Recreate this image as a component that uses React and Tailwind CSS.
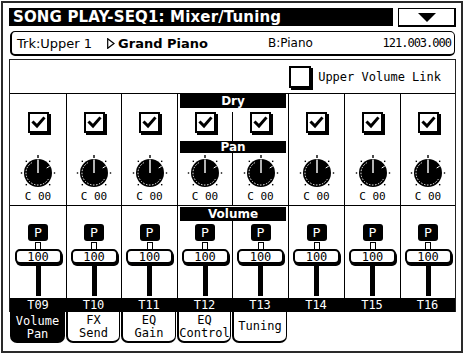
import React from 'react';

const MONO = "font-['DejaVu_Sans_Mono',monospace]";
const SANS = "font-['DejaVu_Sans',sans-serif]";

function Knob() {
  const angles = [-135, -90, -45, 45, 90, 135];
  const dots = angles.map((a) => {
    const rad = ((a - 90) * Math.PI) / 180;
    return [18 + 16.5 * Math.cos(rad), 18 + 16.5 * Math.sin(rad)];
  });
  return (
    <svg width="36" height="36" viewBox="0 0 36 36">
      {dots.map(([x, y], i) => (
        <rect key={i} x={x - 0.7} y={y - 0.7} width="1.4" height="1.4" fill="#000" />
      ))}
      <rect x="17.3" y="0" width="1.4" height="3" fill="#000" />
      <circle cx="18" cy="18" r="14" fill="#000" />
      <path d="M28.39 24 A12 12 0 1 1 12 7.61" fill="none" stroke="#fff" strokeWidth="1" strokeDasharray="1.5 1.5" />
      <line x1="26.7" y1="13" x2="29.7" y2="11.2" stroke="#fff" strokeWidth="1" />
      <line x1="18" y1="18" x2="18" y2="4.5" stroke="#fff" strokeWidth="1.4" />
    </svg>
  );
}

function CheckBox() {
  return (
    <div className="w-[21px] h-[21px] border-2 border-black bg-white shadow-[2px_2px_0_#000]">
      <svg width="17" height="17" viewBox="0 0 17 17">
        <path d="M3.5 8.5 L7 12 L13.5 4.5" fill="none" stroke="#000" strokeWidth="3" strokeLinecap="square" />
      </svg>
    </div>
  );
}

function KnobCell() {
  return (
    <div className="flex flex-col items-center pt-[2px]">
      <Knob />
      <div className={`${MONO} text-[11px] leading-[12px] text-black whitespace-pre`}>C 00</div>
    </div>
  );
}

function Fader() {
  return (
    <div className="h-full flex flex-col items-center pt-[3px] pb-[2px]">
      <div className={`${SANS} w-[20px] h-[17px] bg-black rounded-[3px] text-white text-[13px] leading-none flex items-center justify-center`}>
        P
      </div>
      <div className="w-[6px] h-[8px] mt-[1px] border border-black bg-white" />
      <div className={`${MONO} w-[47px] h-[15px] -mt-[1px] border-2 border-black rounded-[5px] bg-white shadow-[1px_2px_0_#000] flex items-center justify-center text-[12px] leading-none text-black`}>
        100
      </div>
      <div className="w-[5px] flex-1 bg-black mt-[1px]" />
    </div>
  );
}

function Bar({ children }) {
  return (
    <div className={`${SANS} h-full bg-black text-white font-bold text-[12px] leading-none flex items-center justify-center`}>
      {children}
    </div>
  );
}

function Channel({ width, first }) {
  return (
    <div className={`${width} flex flex-col ${first ? '' : 'border-l border-black'}`}>
      <div className="h-[14px]" />
      <div className="h-[33px] pt-[4px] flex justify-center">
        <CheckBox />
      </div>
      <div className="h-[12px]" />
      <div className="h-[53px] border-b border-black">
        <KnobCell />
      </div>
      <div className="h-[15px]" />
      <div className="h-[77px]">
        <Fader />
      </div>
    </div>
  );
}

function Group() {
  return (
    <div className="w-[111px] flex flex-col border-l border-black">
      <div className="h-[14px] px-[2px]">
        <Bar>Dry</Bar>
      </div>
      <div className="h-[33px] flex">
        <div className="w-[54px] pt-[4px] flex justify-center">
          <CheckBox />
        </div>
        <div className="w-px bg-black mt-[4px]" />
        <div className="flex-1 pt-[4px] flex justify-center">
          <CheckBox />
        </div>
      </div>
      <div className="h-[12px] px-[2px]">
        <Bar>Pan</Bar>
      </div>
      <div className="h-[53px] flex border-b border-black">
        <div className="w-[54px]">
          <KnobCell />
        </div>
        <div className="w-px bg-black" />
        <div className="flex-1">
          <KnobCell />
        </div>
      </div>
      <div className="h-[15px] px-[2px] pt-[1px]">
        <Bar>Volume</Bar>
      </div>
      <div className="h-[77px] flex">
        <div className="w-[54px]">
          <Fader />
        </div>
        <div className="w-px bg-black" />
        <div className="flex-1">
          <Fader />
        </div>
      </div>
    </div>
  );
}

const labels = [
  ['T09', 'w-[56px]'],
  ['T10', 'w-[55px]'],
  ['T11', 'w-[56px]'],
  ['T12', 'w-[55px]'],
  ['T13', 'w-[56px]'],
  ['T14', 'w-[56px]'],
  ['T15', 'w-[56px]'],
  ['T16', 'w-[55px]'],
];

function Tab({ lines, active, width }) {
  return (
    <div
      className={`${width} h-[31px] rounded-b-[7px] flex flex-col items-center justify-center ${MONO} text-[12px] leading-[13px] ${
        active ? 'bg-black text-white' : 'bg-white text-black border-l-2 border-r border-b-2 border-black'
      }`}
    >
      {lines.map((l) => (
        <span key={l}>{l}</span>
      ))}
    </div>
  );
}

export default function App() {
  return (
    <div className="w-[464px] h-[354px] bg-white p-[1px]">
      <div className="w-full h-full border-2 border-[#2a2a2a] bg-white">
        <div className="ml-[6px] w-[447px]">
          {/* Title row */}
          <div className="mt-[5px] flex gap-[5px] h-[18px]">
            <div className={`${SANS} flex-1 bg-black text-white font-bold text-[15px] leading-none flex items-center pl-[4px] tracking-[0.15px]`}>
              SONG PLAY-SEQ1: Mixer/Tuning
            </div>
            <div className="w-[58px] h-[19px] border border-black border-r-2 border-b-2 bg-white flex items-center justify-center">
              <svg width="18" height="9" viewBox="0 0 18 9">
                <polygon points="0,0 18,0 9,9" fill="#000" />
              </svg>
            </div>
          </div>

          {/* Track row */}
          <div className="mt-[5px] mx-[1px] h-[25px] rounded-[5px] border border-black border-b-2 border-l-2 flex items-center pl-[5px] pr-[3px] text-black">
            <div className="w-[251px] flex items-center">
              <span className={`${SANS} text-[13px] leading-none`}>Trk:Upper 1</span>
              <svg width="8" height="11" viewBox="0 0 8 11" className="ml-[15px]">
                <polygon points="0.7,0.7 7,5.5 0.7,10.3" fill="none" stroke="#000" strokeWidth="1.2" />
              </svg>
              <span className={`${SANS} ml-[3px] text-[13px] font-bold leading-none`}>Grand Piano</span>
            </div>
            <span className={`${SANS} text-[12px] leading-none`}>B:Piano</span>
            <div className="flex-1" />
            <span className={`${MONO} text-[12px] leading-none tracking-[-1px]`}>121.003.000</span>
          </div>

          {/* Main panel */}
          <div className="mt-[3px] border-x border-t border-[#222]">
            <div className="h-[34px] border-b border-black flex items-center justify-end pr-[14px] gap-[7px]">
              <div className="w-[22px] h-[22px] border-2 border-black bg-white shadow-[2px_2px_0_#000]" />
              <span className={`${MONO} text-[12px] leading-none text-black`}>Upper Volume Link</span>
            </div>
            <div className="flex">
              <Channel width="w-[56px]" first />
              <Channel width="w-[55px]" />
              <Channel width="w-[56px]" />
              <Group />
              <Channel width="w-[56px]" />
              <Channel width="w-[56px]" />
              <Channel width="w-[55px]" />
            </div>
            <div className="h-[14px] bg-black flex">
              {labels.map(([t, w]) => (
                <div key={t} className={`${w} ${MONO} text-white text-[12px] leading-none flex items-center justify-center`}>
                  {t}
                </div>
              ))}
            </div>
          </div>

          {/* Tabs */}
          <div className="flex gap-px ml-[1px]">
            <Tab lines={['Volume', 'Pan']} active width="w-[55px]" />
            <Tab lines={['FX', 'Send']} width="w-[54px]" />
            <Tab lines={['EQ', 'Gain']} width="w-[55px]" />
            <Tab lines={['EQ', 'Control']} width="w-[54px]" />
            <Tab lines={['Tuning']} width="w-[55px]" />
          </div>
        </div>
      </div>
    </div>
  );
}
